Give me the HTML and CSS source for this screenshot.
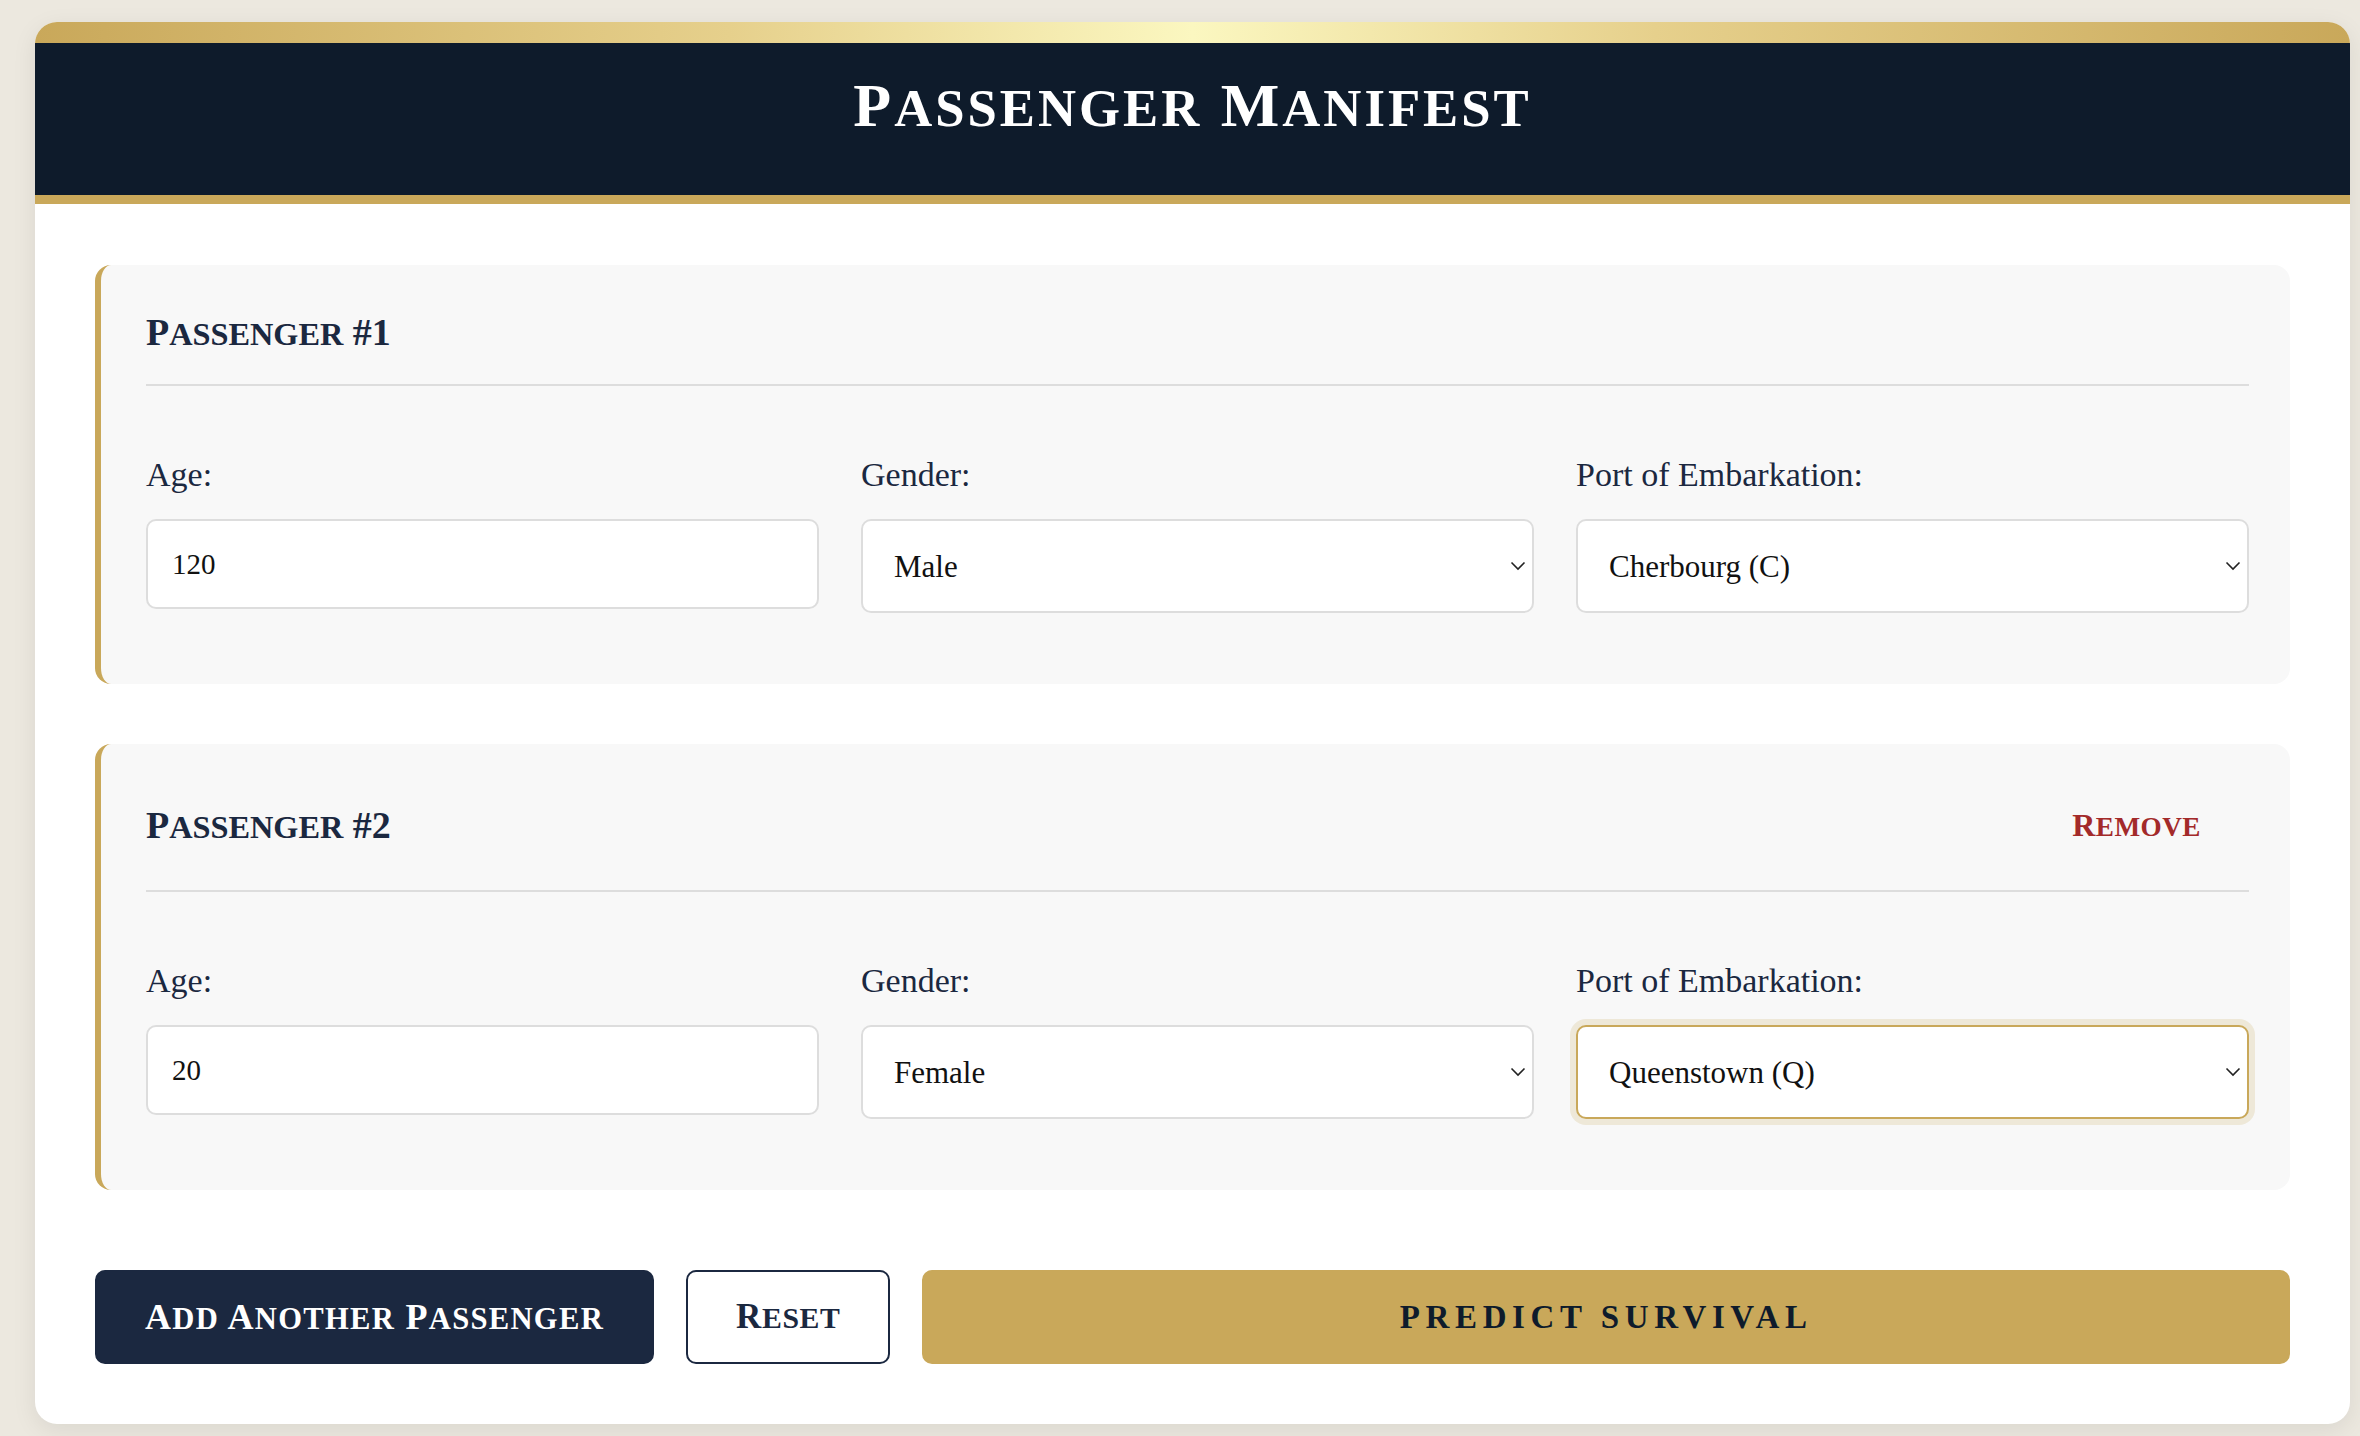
FILE: index.html
```html
<!DOCTYPE html>
<html lang="en">
<head>
<meta charset="utf-8">
<title>Passenger Manifest</title>
<link rel="stylesheet" href="styles.css">
</head>
<body>
<div class="page">
  <div class="card">
    <div class="gold-bar"></div>
    <header class="masthead">
      <h1 class="title">P<span class="sc">assenger</span> M<span class="sc">anifest</span></h1>
    </header>
    <main class="content">
      <section class="passenger">
        <div class="p-head">
          <h2 class="p-title">P<span class="sc">assenger</span> #1</h2>
        </div>
        <div class="fields">
          <div class="field">
            <label class="label" for="age1">Age:</label>
            <input class="control" id="age1" type="text" value="120">
          </div>
          <div class="field">
            <label class="label" for="gender1">Gender:</label>
            <div class="select-wrap">
              <select class="control select" id="gender1">
                <option>Male</option>
                <option>Female</option>
              </select>
              <svg class="chevron" viewBox="0 0 16 10" width="16" height="10"><path d="M1.5 1.5 L8 8 L14.5 1.5" fill="none" stroke="#222" stroke-width="1.6"/></svg>
            </div>
          </div>
          <div class="field">
            <label class="label" for="port1">Port of Embarkation:</label>
            <div class="select-wrap">
              <select class="control select" id="port1">
                <option>Cherbourg (C)</option>
                <option>Queenstown (Q)</option>
                <option>Southampton (S)</option>
              </select>
              <svg class="chevron" viewBox="0 0 16 10" width="16" height="10"><path d="M1.5 1.5 L8 8 L14.5 1.5" fill="none" stroke="#222" stroke-width="1.6"/></svg>
            </div>
          </div>
        </div>
      </section>

      <section class="passenger">
        <div class="p-head p-head-tall">
          <h2 class="p-title">P<span class="sc">assenger</span> #2</h2>
          <button class="remove" type="button">R<span class="sc">emove</span></button>
        </div>
        <div class="fields">
          <div class="field">
            <label class="label" for="age2">Age:</label>
            <input class="control" id="age2" type="text" value="20">
          </div>
          <div class="field">
            <label class="label" for="gender2">Gender:</label>
            <div class="select-wrap">
              <select class="control select" id="gender2">
                <option>Female</option>
                <option>Male</option>
              </select>
              <svg class="chevron" viewBox="0 0 16 10" width="16" height="10"><path d="M1.5 1.5 L8 8 L14.5 1.5" fill="none" stroke="#222" stroke-width="1.6"/></svg>
            </div>
          </div>
          <div class="field">
            <label class="label" for="port2">Port of Embarkation:</label>
            <div class="select-wrap">
              <select class="control select is-focused" id="port2">
                <option>Queenstown (Q)</option>
                <option>Cherbourg (C)</option>
                <option>Southampton (S)</option>
              </select>
              <svg class="chevron" viewBox="0 0 16 10" width="16" height="10"><path d="M1.5 1.5 L8 8 L14.5 1.5" fill="none" stroke="#222" stroke-width="1.6"/></svg>
            </div>
          </div>
        </div>
      </section>

      <div class="actions">
        <button class="btn btn-add" type="button">A<span class="sc">dd</span> A<span class="sc">nother</span> P<span class="sc">assenger</span></button>
        <button class="btn btn-reset" type="button">R<span class="sc">eset</span></button>
        <button class="btn btn-predict" type="button">Predict Survival</button>
      </div>
    </main>
  </div>
</div>
</body>
</html>
```

FILE: styles.css
```css
html, body {
  margin: 0;
  padding: 0;
}

body {
  background: #ece8df;
  font-family: "Liberation Serif", "Times New Roman", serif;
  color: #1b2840;
}

.page {
  padding: 22px 10px 12px 35px;
}

.card {
  background: #ffffff;
  border-radius: 22px;
  overflow: hidden;
  box-shadow: 0 6px 24px rgba(0, 0, 0, 0.08);
}

.gold-bar {
  height: 21px;
  background: linear-gradient(90deg, #c9a85a 0%, #e6d08c 30%, #fbf7c0 50%, #e6d08c 70%, #c9a85a 100%);
}

.masthead {
  background: #0e1b2b;
  height: 125px;
  padding-top: 27px;
  border-bottom: 9px solid #c9a85a;
  display: flex;
  justify-content: center;
}

.title {
  margin: 0;
  color: #ffffff;
  font-size: 62px;
  line-height: 71px;
  font-weight: 700;
  letter-spacing: 3px;
  text-transform: uppercase;
}

.sc {
  font-size: 0.85em;
  text-transform: uppercase;
}

.content {
  padding: 61px 60px 60px;
  display: flex;
  flex-direction: column;
  gap: 60px;
}

.passenger {
  background: #f8f8f8;
  border-left: 6px solid #c9a85a;
  border-radius: 16px;
  padding: 40px 41px 71px 45px;
}

.p-head {
  display: flex;
  align-items: center;
  justify-content: space-between;
  height: 56px;
  padding-bottom: 23px;
  border-bottom: 2px solid #dddddd;
}

.p-head-tall {
  height: 83px;
}

.p-title {
  margin: 0;
  font-size: 38px;
  line-height: 56px;
  font-weight: 700;
  color: #1b2840;
  text-transform: uppercase;
}

.remove {
  height: 83px;
  padding: 0 48px 0 40px;
  background: transparent;
  border: none;
  color: #a32a2a;
  font-family: "Liberation Serif", "Times New Roman", serif;
  font-weight: 700;
  font-size: 32px;
  letter-spacing: 0.5px;
  text-transform: uppercase;
  cursor: pointer;
}

.fields {
  display: grid;
  grid-template-columns: repeat(3, 1fr);
  column-gap: 42px;
  margin-top: 67px;
  align-items: start;
}

.label {
  display: block;
  font-size: 34px;
  line-height: 44px;
  color: #1b2840;
  margin-bottom: 22px;
}

.control {
  display: block;
  width: 100%;
  box-sizing: border-box;
  height: 90px;
  border: 2px solid #dddddd;
  border-radius: 10px;
  background: #ffffff;
  padding: 0 24px;
  font-family: "Liberation Serif", "Times New Roman", serif;
  font-size: 29px;
  color: #111111;
  outline: none;
}

.select-wrap {
  position: relative;
}

.select {
  height: 94px;
  padding: 0 40px 0 31px;
  font-size: 31px;
  -webkit-appearance: none;
  appearance: none;
}

.select.is-focused {
  border-color: #c9a85a;
  box-shadow: 0 0 0 6px rgba(201, 168, 90, 0.2);
}

.chevron {
  position: absolute;
  right: 8px;
  top: 50%;
  margin-top: -5px;
  pointer-events: none;
}

.actions {
  display: flex;
  gap: 32px;
  margin-top: 20px;
}

.btn {
  height: 94px;
  border-radius: 10px;
  font-family: "Liberation Serif", "Times New Roman", serif;
  font-weight: 700;
  text-transform: uppercase;
  cursor: pointer;
}

.btn-add {
  padding: 0 48px;
  background: #1b2840;
  border: 2px solid #1b2840;
  color: #ffffff;
  font-size: 36px;
  letter-spacing: 1.3px;
}

.btn-reset {
  padding: 0 48px;
  background: #ffffff;
  border: 2px solid #1b2840;
  color: #1b2840;
  font-size: 35px;
  letter-spacing: 0.6px;
}

.btn-predict {
  flex: 1;
  background: #c9a85a;
  border: 2px solid #c9a85a;
  color: #0e1b2b;
  font-size: 33px;
  letter-spacing: 5.6px;
}
```
